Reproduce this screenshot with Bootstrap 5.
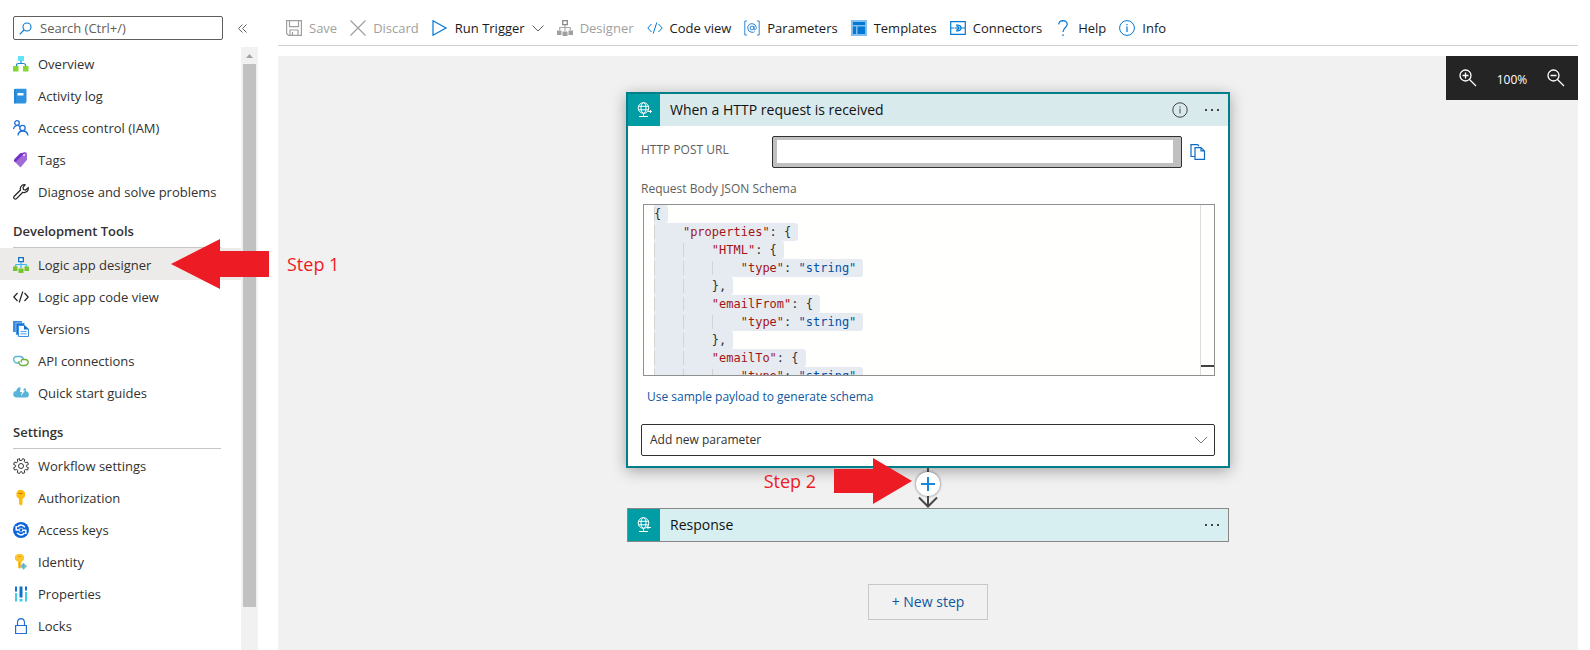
<!DOCTYPE html>
<html lang="en">
<head>
<meta charset="utf-8">
<meta name="viewport" content="width=device-width, initial-scale=1">
<title>Logic app designer</title>
<link href="https://cdn.jsdelivr.net/npm/bootstrap@5.3.0/dist/css/bootstrap.min.css" rel="stylesheet">
<script src="https://cdn.jsdelivr.net/npm/bootstrap@5.3.0/dist/js/bootstrap.bundle.min.js" defer></script>
<style>
  body { font-family: "Open Sans", "Noto Sans", sans-serif; font-size: 13px; line-height: 20px; color: #323130; background: #fff; }
  svg { display: block; flex: none; }
  a { text-decoration: none; }
  .btn { --bs-btn-font-size: 13px; --bs-btn-line-height: 20px; --bs-btn-padding-x: 0; --bs-btn-padding-y: 0; --bs-btn-border-radius: 0; --bs-btn-border-width: 0; --bs-btn-color: #1b1a19; --bs-btn-disabled-color: #a19f9d; --bs-btn-disabled-opacity: 1; }

  /* side menu */
  .side { width: 258px; }
  .side-top { height: 47px; padding: 16px 0 0 13px; }
  .search { width: 210px; height: 24px; border: 1px solid #605e5c; border-radius: 2px; padding: 0 5px; }
  .search input { border: 0; padding: 0; font-size: 13px; line-height: 20px; min-height: 0; color: #323130; }
  .search input::placeholder { color: #605e5c; opacity: 1; }
  .collapse-menu { height: 24px; margin-left: 15px; }
  .side-menu a { height: 32px; padding: 2px 0 0 13px; gap: 9px; color: #323130; }
  .side-menu a.active { background: #edebe9; }
  .side-menu h2 { height: 41px; margin: 0 20px 0 13px; padding-top: 14px; border-bottom: 1px solid #c8c6c4; font-size: 13px; line-height: 20px; font-weight: 600; }
  .track { width: 17px; background: #f1f1f1; }
  .thumb { width: 13px; height: 543px; background: #c1c1c1; }
  .callout { position: absolute; z-index: 3; display: flex; align-items: center; color: #ed1c24; font-size: 18px; line-height: 24px; white-space: nowrap; pointer-events: none; }
  .callout-nav { left: 171px; top: -9px; gap: 18px; }
  .callout-add { right: calc(50% + 16px); top: -10px; gap: 18px; }

  /* command bar */
  .workspace { margin: 0 12px 0 20px; }
  .commands { height: 46px; padding: 18px 8px 0; gap: 13px; border-bottom: 1px solid #d2d0ce; }
  .commands .btn { gap: 7px; }

  /* canvas */
  .board { margin-top: 10px; padding-top: 36px; background: #f1f1f1; }
  .zoombar { position: absolute; top: 0; right: 0; height: 44px; padding: 0 13px; background: #242424; width: 132px; }
  .zoombar, .zoombar .btn { color: #fff; font-size: 12px; }
  .step { width: 604px; }
  .trigger { border: 2px solid #007e8a; box-shadow: 0 3px 14px rgba(0,0,0,.32); background: #fff; }
  .step-head { height: 32px; background: #d9eaed; color: #111; font-size: 14px; }
  .step-icon { width: 32px; height: 32px; background: #009da5; margin-right: 10px; }
  .trigger-body { padding: 10px 13px; font-size: 12px; color: #605e5c; }
  .url-box { width: 410px; height: 32px; border: 1px solid #323130; border-radius: 2px; background: #c0c0c0; padding: 3px 8px 4px 4px; }
  .url-box input { border: 0; border-radius: 0; padding: 0; min-height: 0; height: 23px; background: #fff; }
  .copy { margin: 0 9px 0 8px; }
  .schema-label { margin-top: 11px; }
  .editor { height: 172px; margin: 5px 0 0 2px; border: 1px solid #8f8f8f; background: #fffffe; overflow: hidden; }
  .editor pre { margin: 0; padding-left: 10px; font: 12px/18px "DejaVu Sans Mono", monospace; color: #323130; overflow: hidden; }
  .editor pre span { display: block; width: max-content; background: #e5ebf1; border-radius: 0 3px 3px 0; padding-right: 7px; height: 18px; }
  .editor pre i { font-style: normal; box-shadow: inset 1px 0 #d3d3d3; }
  .editor pre b { font-weight: 400; color: #a31515; }
  .editor pre em { font-style: normal; color: #0451a5; }
  .ruler { width: 14px; border-left: 1px solid #dcdcdc; }
  .ruler div { height: 2px; margin-bottom: 8px; background: #424242; }
  .sample { color: #0f57a0; padding-left: 6px; margin-top: 11px; }
  .param { height: 32px; margin-top: 17px; border: 1px solid #323130; border-radius: 2px; padding: 0 8px; font-size: 12px; line-height: 20px; color: #323130; background-color: #fff;
    background-image: url("data:image/svg+xml,%3Csvg xmlns='http://www.w3.org/2000/svg' width='14' height='8' viewBox='0 0 14 8'%3E%3Cpath fill='none' stroke='%23777' d='M1 1l6 6 6-6'/%3E%3C/svg%3E"); background-size: 14px 8px; background-position: right 6px center; }
  .link-row { height: 40px; }
  .response { width: 602px; border: 1px solid #8a8886; }
  .response .step-head { background: #d7eff1; }
  .add-round { width: 24px; height: 24px; border-radius: 50%; background: #fff; box-shadow: 0 0 2px 1px rgba(0,0,0,.28); }
  .new-step { width: 120px; height: 36px; margin-top: 42px; font-size: 14px; color: #0f57a0; border: 1px solid #c8c8c8; }
</style>
</head>
<body class="d-flex vh-100 overflow-hidden">

<aside class="side flex-shrink-0 d-flex flex-column">
  <div class="side-top d-flex">
    <div class="search d-flex align-items-center">
      <svg width="13" height="13" viewBox="0 0 13 13" fill="none" stroke="#0078d4" stroke-width="1.1"><circle cx="8" cy="5" r="4"/><path d="M5 8L.7 12.300"/></svg>
      <input class="form-control ms-1 ps-1 bg-transparent" type="text" placeholder="Search (Ctrl+/)" aria-label="Search menu">
    </div>
    <button class="btn collapse-menu" type="button" aria-label="Collapse menu"><svg width="9" height="9" viewBox="0 0 9 9" fill="none" stroke="#605e5c"><path d="M4.500.5l-4 4 4 4M8.500.5l-4 4 4 4"/></svg></button>
  </div>
  <div class="d-flex flex-grow-1">
    <nav class="side-menu flex-grow-1">
      <a href="#" class="d-flex align-items-center"><svg width="16" height="16" viewBox="0 0 16 16"><path d="M5 0h6v5H5z" fill="#5ee6f8"/><path d="M8 5v2.500M3.500 10V9.500Q3.500 7.500 5.500 7.500h5q2 0 2 2V10" fill="none" stroke="#1f87d6" stroke-width="1.200"/><path d="M0 10h5.500v5.500H0zM10 10h5.500v5.500H10z" fill="#86d633"/></svg>Overview</a>
      <a href="#" class="d-flex align-items-center"><svg width="16" height="16" viewBox="0 0 16 16"><rect x="2" y=".5" width="12" height="14" rx="1" fill="#9cc8ee"/><rect x="1" y="1" width="12" height="14.500" rx="1" fill="#2e92e0"/><path d="M1.500 1h1v14.500h-1z" fill="#1a78c8"/><rect x="4.500" y="5" width="6" height="2.500" fill="#fff"/></svg>Activity log</a>
      <a href="#" class="d-flex align-items-center"><svg width="16" height="16" viewBox="0 0 16 16" fill="none" stroke="#1f6fd6" stroke-width="1.300"><circle cx="4" cy="3" r="2.300"/><path d="M.6 9C.8 5 5.500 4.500 7 7"/><circle cx="9.500" cy="8" r="2.700"/><path d="M5 15.500c.5-6 9-6 10 0"/></svg>Access control (IAM)</a>
      <a href="#" class="d-flex align-items-center"><svg width="16" height="16" viewBox="0 0 16 16"><path d="M7 1.500L12.500.3q1.500 0 1.500 1.500v6L7.500 15.500 1 9z" fill="#a06ad8"/><path d="M7 1.500L12.500.3 2.300 10.300 1 9V7.500z" fill="#7630c8"/><circle cx="11" cy="3" r="1" fill="#f3eaff"/></svg>Tags</a>
      <a href="#" class="d-flex align-items-center"><svg width="16" height="16" viewBox="0 0 16 16" fill="none" stroke="#222" stroke-width="1.200"><path d="M12 .8C9 .2 6.500 3 7.500 6L1 12.500c-1 1.500.8 3.300 2.300 2.300L9.800 8.300c3 .9 6-1.300 5.400-4.600L12.600 6 10.500 5.500 10 3.300z"/></svg>Diagnose and solve problems</a>

      <h2>Development Tools</h2>
      <div class="position-relative">
        <a href="#" class="active d-flex align-items-center" aria-current="page"><svg width="16" height="16" viewBox="0 0 16 16"><path d="M5.700.7h4.600v4H5.700z" fill="#fff" stroke="#0f6cc4" stroke-width="1.300"/><path d="M8 5v6M2.700 10V8q0-.5.500-.5h9.600q.5 0 .5.500v2" fill="none" stroke="#35b9f0" stroke-width="1.200"/><path d="M0 9.500h4.500V14H0zM5.500 11.500h5V16h-5zM11.500 9.500H16V14h-4.500z" fill="#76c52a"/></svg>Logic app designer</a>
        <div class="callout callout-nav"><svg width="98" height="50" viewBox="0 0 98 50"><path d="M0 25L49 0v12h49v26H49v12z" fill="#ed1c24"/></svg>Step 1</div>
      </div>
      <a href="#" class="d-flex align-items-center"><svg width="16" height="16" viewBox="0 0 16 16" fill="none" stroke="#222" stroke-width="1.200"><path d="M4.500 4L.8 8l3.700 4M11.500 4l3.700 4-3.700 4M9.800 2.500l-3.600 11"/></svg>Logic app code view</a>
      <a href="#" class="d-flex align-items-center"><svg width="16" height="16" viewBox="0 0 16 16"><path d="M0 0h9v11H0z" fill="#3a8ee6"/><path d="M3 2h8.500v12H3z" fill="#1a6fd0" stroke="#b9dcfa" stroke-width=".6"/><path d="M5.500 4.500h6L15.500 8v7.500h-10z" fill="#f4faff" stroke="#3a8ee6"/><path d="M11 4l5 4.500h-5z" fill="#1468c8"/><path d="M7.500 10.500h6M7.500 12.800h6" stroke="#5aa5ee"/></svg>Versions</a>
      <a href="#" class="d-flex align-items-center"><svg width="16" height="16" viewBox="0 0 16 16" fill="none" stroke-width="1.300"><path d="M6 10H4Q.7 9.500.7 6.500T4 3.500h3.500Q10.500 4 10.500 7" stroke="#5bb5d5"/><path d="M6 8Q5.500 12 9 12.500h3q3.200-.5 3.200-3.200T12 6.500H9.500Q7.500 7 8.500 9.500" stroke="#6db33f"/></svg>API connections</a>
      <a href="#" class="d-flex align-items-center"><svg width="16" height="16" viewBox="0 0 16 16"><path d="M4 12.500Q.2 12.500.2 9.300T3.200 6Q4 2 7.700 2.300L7 7h2L8 11l4-5.500H9.700L12 2.700Q13.300 4 13 6.300 16 7 15.900 9.700T13 12.500z" fill="#59b4d9"/></svg>Quick start guides</a>

      <h2>Settings</h2>
      <a href="#" class="d-flex align-items-center"><svg width="16" height="16" viewBox="0 0 16 16" fill="none" stroke="#333"><circle cx="8" cy="8" r="2.500"/><path d="M6.700 2.500L6.500.6 4.300 1.400l.5 2.300-1 .9-2.300-.5L.6 6.400l2 1v1.300l-2 1 .9 2.300 2.300-.5 1 .9-.5 2.300 2.200.8 1.100-1.900h1l1.100 1.900 2-.8-.4-2.300 1-.9 2.200.5.900-2.300-2-1V7.400l2-1-.9-2.300-2.300.5-.9-.9.4-2.300L9.600.6l-.9 1.900z"/></svg>Workflow settings</a>
      <a href="#" class="d-flex align-items-center"><svg width="16" height="16" viewBox="0 0 16 16"><path d="M5.500 0h4L12 2.500v4L9.500 9v5L8 15.700 6 14V9L3.500 6.500v-4z" fill="#fdbc11"/><path d="M5.500 3h4v1h-4z" fill="#c87a00"/></svg>Authorization</a>
      <a href="#" class="d-flex align-items-center"><svg width="16" height="16" viewBox="0 0 16 16"><circle cx="8" cy="8" r="8" fill="#0c62d9"/><path d="M12 5.300Q8 1 4.500 5M3.200 4v4H7M4 10.700Q8 15 11.500 11M12.800 12V8.300H9" fill="none" stroke="#fff" stroke-width="1.500"/><path d="M6 6.300h4M6 9.700h4" stroke="#a8cdf8"/></svg>Access keys</a>
      <a href="#" class="d-flex align-items-center"><svg width="16" height="16" viewBox="0 0 16 16"><path d="M4.500 0h4L11 2v3.500L8.500 8v5L7 15l-2-1.500V8L2 5.500V2z" fill="#fdc52b"/><path d="M5 2.500h3M6.500 8v6" stroke="#e0a010" stroke-width=".8"/><path d="M10.500 8.700l3.700 3.500-3.700 3.500-3.600-3.500z" fill="#7cc3dc"/><path d="M10.500 9.500v5M8.500 12.200h4" stroke="#5ba9c6" stroke-width=".8"/></svg>Identity</a>
      <a href="#" class="d-flex align-items-center"><svg width="16" height="16" viewBox="0 0 16 16"><path d="M2 .5h2v5H2zM6.500.5h3v11h-3zM12 .5h2v4h-2z" fill="#1270c8"/><path d="M2 7h2v8.500H2zM6.500 13h3v2.500h-3zM12 6h2v9.500h-2z" fill="#40cdea"/></svg>Properties</a>
      <a href="#" class="d-flex align-items-center"><svg width="16" height="16" viewBox="0 0 16 16" fill="none" stroke="#1f6fd6" stroke-width="1.200"><path d="M2.600 7.500h10.800v8H2.600zM4.500 7.500V4.300q.3-3.600 3.500-3.700 3.200.1 3.500 3.700v3.200"/></svg>Locks</a>
    </nav>
    <div class="track d-flex flex-column align-items-center">
      <svg width="17" height="17" viewBox="0 0 17 17"><path d="M5 11l3.500-4 3.500 4z" fill="#a3a3a3"/></svg>
      <div class="thumb"></div>
    </div>
  </div>
</aside>

<main class="workspace flex-grow-1 d-flex flex-column">
  <div class="commands d-flex align-items-start" role="toolbar">
    <button class="btn d-flex align-items-center" type="button" disabled><svg width="16" height="16" viewBox="0 0 16 16" fill="none" stroke="#a19f9d" stroke-width="1.200"><path d="M.6.6h14.800v14.800H2.500L.6 13.500zM3.500.6v6h9v-6M4 15v-5h8v5M6.500 12v3"/></svg>Save</button>
    <button class="btn d-flex align-items-center" type="button" disabled><svg width="16" height="16" viewBox="0 0 16 16" stroke="#a19f9d" stroke-width="1.200"><path d="M.5.5l15 15M15.500.5l-15 15"/></svg>Discard</button>
    <button class="btn d-flex align-items-center" type="button"><svg width="16" height="16" viewBox="0 0 16 16" fill="none" stroke="#0078d4" stroke-width="1.200"><path d="M1 .8L14 8 1 15.200z"/></svg>Run Trigger<svg width="12" height="8" viewBox="0 0 12 8" fill="none" stroke="#605e5c"><path d="M.5 1.500L6 7l5.500-5.500"/></svg></button>
    <button class="btn d-flex align-items-center" type="button" disabled><svg width="16" height="16" viewBox="0 0 16 16"><path d="M5.700.7h4.600v4H5.700z" fill="none" stroke="#888" stroke-width="1.300"/><path d="M8 5v6M2.700 10V7.500h10.600V10" fill="none" stroke="#aaa" stroke-width="1.200"/><path d="M0 10.500h4.500V15H0zM5.500 11.500h5V16h-5zM11.500 10.500H16V15h-4.500z" fill="#a19f9d"/></svg>Designer</button>
    <button class="btn d-flex align-items-center" type="button"><svg width="16" height="16" viewBox="0 0 16 16" fill="none" stroke="#0078d4"><path d="M4.500 4L.8 8l3.700 4M11.500 4l3.700 4-3.700 4M9.800 2.500l-3.600 11"/></svg>Code view</button>
    <button class="btn d-flex align-items-center" type="button"><svg width="16" height="16" viewBox="0 0 16 16" fill="none" stroke="#2b88d8"><path d="M3 1H.8v14H3M13 1h2.200v14H13"/><circle cx="8" cy="8" r="1.900"/><path d="M10 5.800V9q.3 1.200 1.300.8Q12.500 9 12.300 7.500 11.800 3.700 8 3.600 3.800 3.900 3.700 8q.2 4.200 4.300 4.400 1.600 0 2.600-.8"/></svg>Parameters</button>
    <button class="btn d-flex align-items-center" type="button"><svg width="16" height="16" viewBox="0 0 16 16"><path d="M0 0h16v16H0z" fill="#83beec"/><path d="M2 2h12v3H2zM2 6.500h3V14H2zM6.500 6.500H14V14H6.500z" fill="#0078d4"/></svg>Templates</button>
    <button class="btn d-flex align-items-center" type="button"><svg width="16" height="16" viewBox="0 0 16 16" fill="none" stroke="#0078d4" stroke-width="1.200"><path d="M.7 1.700h14.600v12.600H.7zM1 8h3.500M11.500 8H15M6 5.200h2q3 .4 3 2.800t-3 2.800H6M5 8h3.500M6.500 6.500q2.500 0 2.500 1.500t-2.500 1.500"/></svg>Connectors</button>
    <button class="btn d-flex align-items-center" type="button"><svg width="16" height="16" viewBox="0 0 16 16" fill="none" stroke="#0078d4" stroke-width="1.200"><path d="M3.700 4.300Q4.200.7 8 .6q4 .2 4.200 3.600 0 1.800-2 3.500Q8 9.500 8 12M8 14.300V16"/></svg>Help</button>
    <button class="btn d-flex align-items-center" type="button"><svg width="16" height="16" viewBox="0 0 16 16" fill="none" stroke="#0078d4"><circle cx="8" cy="8" r="7.400"/><path d="M8 6.500V12M8 4v1.300" stroke-width="1.200"/></svg>Info</button>
  </div>

  <section class="board position-relative flex-grow-1 d-flex flex-column align-items-center">
    <div class="zoombar d-flex align-items-center justify-content-between">
      <button class="btn" type="button" aria-label="Zoom in"><svg width="18" height="18" viewBox="0 0 18 18" fill="none" stroke="#fff" stroke-width="1.300"><circle cx="6.500" cy="6.500" r="5.500"/><path d="M10.500 10.500L17 17M3.500 6.500h6M6.500 3.500v6"/></svg></button>
      <span class="pt-1">100%</span>
      <button class="btn" type="button" aria-label="Zoom out"><svg width="18" height="18" viewBox="0 0 18 18" fill="none" stroke="#fff" stroke-width="1.300"><circle cx="6.500" cy="6.500" r="5.500"/><path d="M10.500 10.500L17 17M3.500 6.500h6"/></svg></button>
    </div>

    <article class="step trigger">
      <header class="step-head d-flex align-items-center">
        <span class="step-icon d-flex align-items-center justify-content-center"><svg width="16" height="16" viewBox="0 0 16 16" fill="none" stroke="#fff"><circle cx="7.500" cy="6" r="5.300"/><ellipse cx="7.500" cy="6" rx="2.500" ry="5.300"/><path d="M2.500 4.300h10M2.500 7.800h10M7.500 11v3M3 14.500h9M12 9.500h3.500M14 8l1.500 1.500L14 11"/></svg></span>
        <span class="flex-grow-1">When a HTTP request is received</span>
        <button class="btn me-3" type="button" aria-label="About"><svg width="16" height="16" viewBox="0 0 16 16" fill="none" stroke="#444"><circle cx="8" cy="8" r="7.200"/><path d="M8 6.500V11.500M8 4.300v1.200"/></svg></button>
        <button class="btn me-2" type="button" aria-label="More"><svg width="16" height="4" viewBox="0 0 16 4" fill="#444"><path d="M1 1h2v2H1zM7 1h2v2H7zM13 1h2v2h-2z"/></svg></button>
      </header>
      <div class="trigger-body">
        <div class="d-flex">
          <label class="flex-grow-1 pt-1" for="postUrl">HTTP POST URL</label>
          <div class="url-box"><input id="postUrl" class="form-control" type="text" readonly></div>
          <button class="btn copy" type="button" aria-label="Copy"><svg width="16" height="16" viewBox="0 0 16 16" fill="none" stroke="#0f6cc4" stroke-width="1.200"><path d="M4.500 12.500H1V.6h6.500L9 2M5 3.600h6l3.500 3.300v8.500H5zM11 3.600v3.300h3.500"/></svg></button>
        </div>
        <div class="schema-label">Request Body JSON Schema</div>
        <div class="editor d-flex">
          <pre class="flex-grow-1"><span><i>{</i></span><span><i>    </i><b>"properties"</b>: {</span><span><i>    </i><i>    </i><b>"HTML"</b>: {</span><span><i>    </i><i>    </i><i>    </i><b>"type"</b>: <em>"string"</em></span><span><i>    </i><i>    </i>},</span><span><i>    </i><i>    </i><b>"emailFrom"</b>: {</span><span><i>    </i><i>    </i><i>    </i><b>"type"</b>: <em>"string"</em></span><span><i>    </i><i>    </i>},</span><span><i>    </i><i>    </i><b>"emailTo"</b>: {</span><span><i>    </i><i>    </i><i>    </i><b>"type"</b>: <em>"string"</em></span></pre>
          <div class="ruler d-flex flex-column justify-content-end"><div></div></div>
        </div>
        <div class="sample"><a class="text-reset" href="#">Use sample payload to generate schema</a></div>
        <select class="form-select param" aria-label="Add new parameter"><option>Add new parameter</option></select>
      </div>
    </article>

    <div class="link-row w-100 position-relative d-flex flex-column align-items-center">
      <div class="callout callout-add">Step 2<svg width="78" height="46" viewBox="0 0 78 46"><path d="M78 23L39 0v11H0v24h39v11z" fill="#ed1c24"/></svg></div>
      <svg width="2" height="4"><path d="M0 0h2v4H0z" fill="#484644"/></svg>
      <button class="btn add-round d-flex align-items-center justify-content-center" type="button" aria-label="Insert a step"><svg width="14" height="14" viewBox="0 0 14 14"><path d="M7 0v14M0 7h14" stroke="#1a86d9" stroke-width="2"/></svg></button>
      <svg width="20" height="12" viewBox="0 0 20 12" fill="none" stroke="#484644" stroke-width="2"><path d="M10 0v10M1 1.500l9 9 9-9"/></svg>
    </div>

    <article class="step response">
      <header class="step-head d-flex align-items-center">
        <span class="step-icon d-flex align-items-center justify-content-center"><svg width="16" height="16" viewBox="0 0 16 16" fill="none" stroke="#fff"><circle cx="7.500" cy="6" r="5.300"/><ellipse cx="7.500" cy="6" rx="2.500" ry="5.300"/><path d="M2.500 4.300h10M2.500 7.800h10M7.500 11v3M3 14.500h9M15 10.500h-4M12.500 9L11 10.500l1.500 1.500"/></svg></span>
        <span class="flex-grow-1">Response</span>
        <button class="btn me-2" type="button" aria-label="More"><svg width="16" height="4" viewBox="0 0 16 4" fill="#444"><path d="M1 1h2v2H1zM7 1h2v2H7zM13 1h2v2h-2z"/></svg></button>
      </header>
    </article>

    <button class="btn new-step" type="button">+ New step</button>
  </section>
</main>
</body>
</html>
